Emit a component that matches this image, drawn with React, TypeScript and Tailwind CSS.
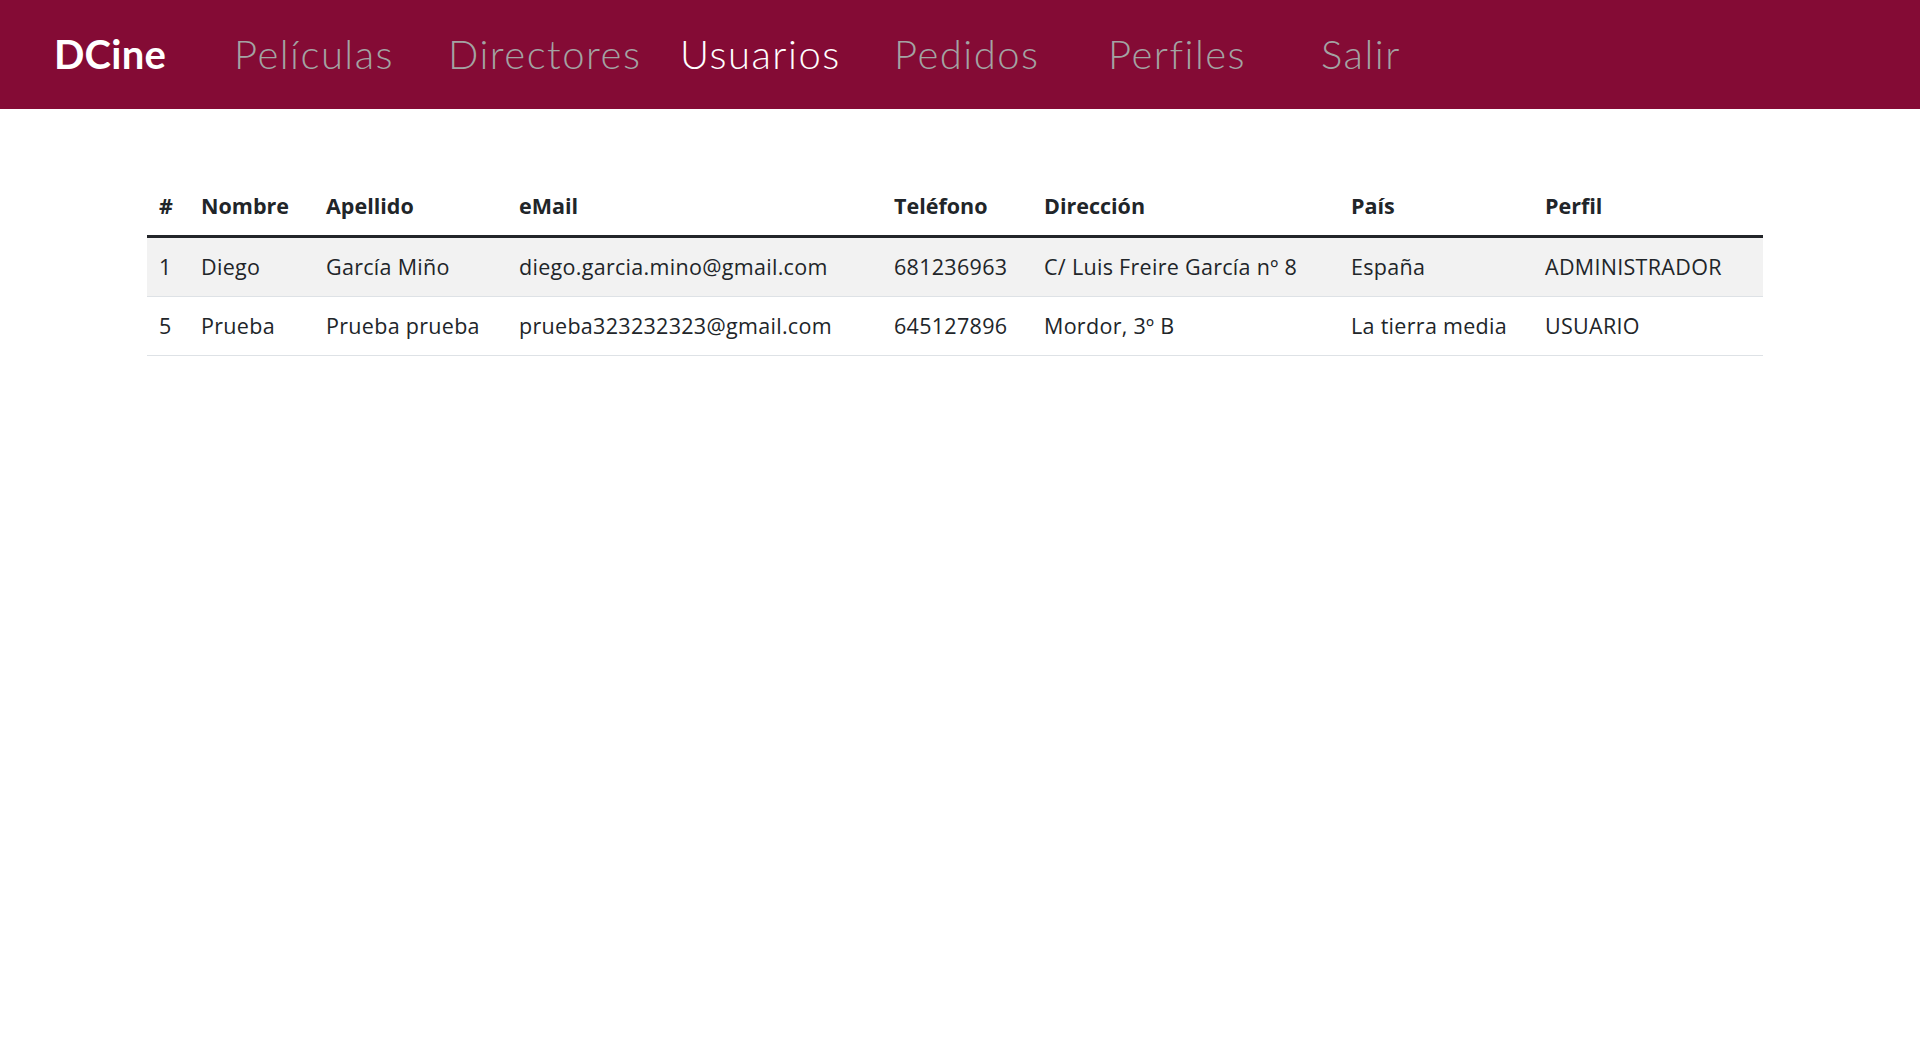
const links = [
  { label: "Películas", w: "w-[214px]", active: false },
  { label: "Directores", w: "w-[232px]", active: false },
  { label: "Usuarios", w: "w-[214px]", active: true },
  { label: "Pedidos", w: "w-[214px]", active: false },
  { label: "Perfiles", w: "w-[213px]", active: false },
  { label: "Salir", w: "w-[120px]", active: false },
];

const usuarios = [
  {
    id: 1,
    nombre: "Diego",
    apellido: "García Miño",
    email: "diego.garcia.mino@gmail.com",
    telefono: "681236963",
    direccion: "C/ Luis Freire García nº 8",
    pais: "España",
    perfil: "ADMINISTRADOR",
  },
  {
    id: 5,
    nombre: "Prueba",
    apellido: "Prueba prueba",
    email: "prueba323232323@gmail.com",
    telefono: "645127896",
    direccion: "Mordor, 3º B",
    pais: "La tierra media",
    perfil: "USUARIO",
  },
];

const headers = ["#", "Nombre", "Apellido", "eMail", "Teléfono", "Dirección", "País", "Perfil"];

export default function App() {
  return (
    <div className="min-h-screen bg-white">
      <nav className="h-[109px] bg-[#840b35] flex items-center pl-[54px] pb-[2px]">
        <span className="w-[180px] text-[40px] font-bold text-white font-['Lato',sans-serif] tracking-[0.2px]">
          DCine
        </span>
        {links.map((l) => (
          <a
            key={l.label}
            href="#"
            className={`${l.w} text-[40px] font-light font-['Lato',sans-serif] tracking-[1.5px] ${
              l.active ? "text-white" : "text-[#a3a3a3]"
            }`}
          >
            {l.label}
          </a>
        ))}
      </nav>

      <div className="pt-[68px] pl-[147px]">
        <table className="w-[1616px] table-fixed border-collapse text-[21.5px] leading-[30px] tracking-[0.3px] text-[#212529] font-['Open_Sans','Noto_Sans',sans-serif]">
          <colgroup>
            <col className="w-[42px]" />
            <col className="w-[125px]" />
            <col className="w-[193px]" />
            <col className="w-[375px]" />
            <col className="w-[150px]" />
            <col className="w-[307px]" />
            <col className="w-[194px]" />
            <col className="w-[230px]" />
          </colgroup>
          <thead>
            <tr className="border-b-[3px] border-[#222529]">
              {headers.map((h) => (
                <th key={h} className="px-3 py-[14px] text-left font-bold tracking-normal">
                  {h}
                </th>
              ))}
            </tr>
          </thead>
          <tbody>
            {usuarios.map((u, i) => (
              <tr
                key={u.id}
                className={`border-b border-[#dee2e6] ${i % 2 === 0 ? "bg-[#f2f2f2]" : "bg-white"}`}
              >
                <td className="px-3 py-[14px]">{u.id}</td>
                <td className="px-3 py-[14px]">{u.nombre}</td>
                <td className="px-3 py-[14px]">{u.apellido}</td>
                <td className="px-3 py-[14px]">{u.email}</td>
                <td className="px-3 py-[14px]">{u.telefono}</td>
                <td className="px-3 py-[14px]">{u.direccion}</td>
                <td className="px-3 py-[14px]">{u.pais}</td>
                <td className="px-3 py-[14px]">{u.perfil}</td>
              </tr>
            ))}
          </tbody>
        </table>
      </div>
    </div>
  );
}
